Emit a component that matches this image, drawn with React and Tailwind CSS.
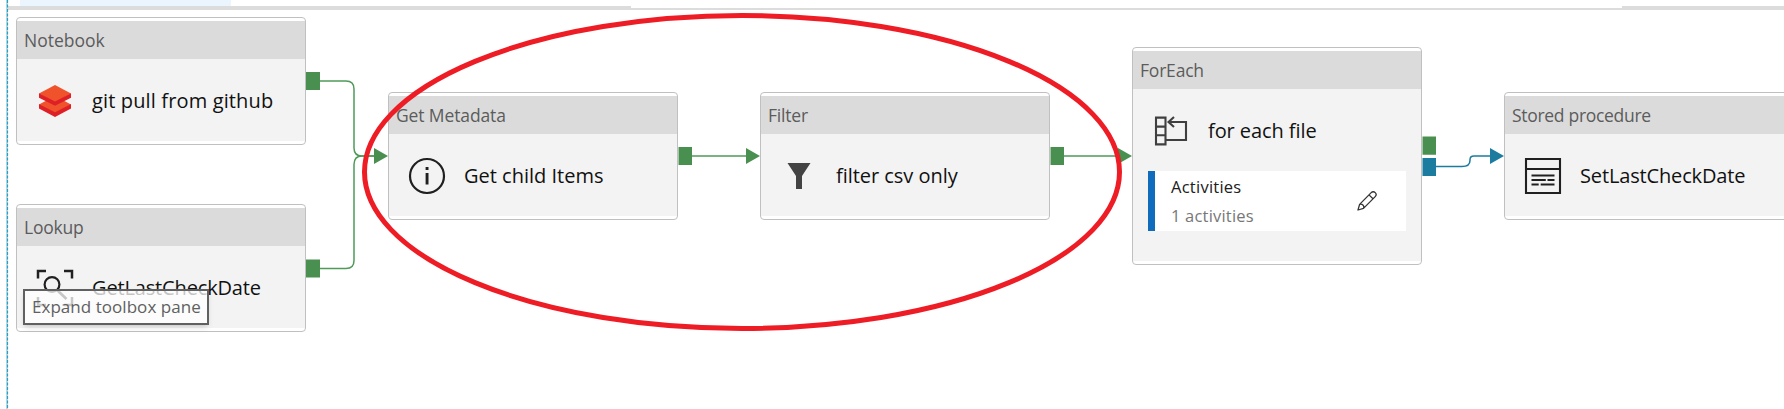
const ink = "#202020";

function BricksIcon() {
  return (
    <svg width="34" height="34" viewBox="0 0 34 34">
      <path d="M1 20.500 17 12l16 8.500L17 29Z" fill="#f0532b" />
      <path d="M1 20 17 28.300l16-8.300v4.500L17 33 1 24.500Z" fill="#de1f26" />
      <path d="M1 9.500 17 1l16 8.500-16 9Z" fill="#f0532b" />
      <path d="M1 9.300l16 8.300L33 9.300v4.500L17 21.800 1 13.800Z" fill="#de1f26" />
    </svg>
  );
}

function LookupIcon() {
  return (
    <svg width="38" height="38" viewBox="0 0 38 38" fill="none" stroke={ink}>
      <path d="M2 9.500V2H10M28 2h8v7.500M2 28v8h8M28 36h8v-8" strokeWidth="2.500" />
      <circle cx="16" cy="15.500" r="7.400" strokeWidth="2.200" />
      <path d="M21 21l9.500 9" strokeWidth="2.600" />
    </svg>
  );
}

function InfoIcon() {
  return (
    <svg width="38" height="38" viewBox="0 0 38 38">
      <circle cx="19" cy="19" r="17" fill="none" stroke={ink} strokeWidth="2.200" />
      <path d="M17.600 10h2.900v3h-2.900zM17.600 16h2.900v11.600h-2.900z" fill={ink} />
    </svg>
  );
}

function FunnelIcon() {
  return (
    <svg width="24" height="28" viewBox="0 0 24 28">
      <path d="M.5 1h23L15 14v13H9V14Z" fill="#434343" />
    </svg>
  );
}

function LoopIcon() {
  return (
    <svg width="34" height="32" viewBox="0 0 34 32" fill="none" stroke="#3f3f3f" strokeWidth="2.100">
      <path d="M2 2.600h9.500v26.800H2zM2 11.600h9.500M2 20.300h9.500M14 7h18v18H12M20 2l-5.500 5L20 12" />
    </svg>
  );
}

function ProcedureIcon() {
  return (
    <svg width="38" height="38" viewBox="0 0 38 38" fill="none" stroke={ink} strokeWidth="2.100">
      <path d="M2 2h34v34H2zM2 12h34M7.500 18.500h23M7.500 23h14.300M23.500 23h7M7.500 27.500h7.200M16.700 27.500h13.800" />
    </svg>
  );
}

function PencilIcon() {
  return (
    <svg width="22" height="22" viewBox="0 0 22 22" fill="none" stroke="#333" strokeWidth="1.300" strokeLinejoin="round">
      <path d="M2 20l1.600-5.600L15.200 2.600a2.700 2.700 0 0 1 4 4L7.500 18.400ZM3.600 14.400a3 3 0 0 1 3.900 4M13 4.900l4 3.900" />
    </svg>
  );
}

function Node({ place, type, typeClass = "tracking-[-0.200px]", name, nameClass, icon, children }) {
  return (
    <section className={`absolute flex w-[290px] flex-col rounded-[4px] border border-[#c0c0c0] bg-white pt-[3px] pb-[3px] ${place}`}>
      <header className="flex h-[38px] shrink-0 items-center bg-[#dbdbdb] pl-[7px] text-[17.500px] text-[#5c5c5c]">
        <span className={typeClass}>{type}</span>
      </header>
      <div className="flex grow flex-col bg-[#f3f3f3]">
        <div className="flex h-[82px] shrink-0 items-center gap-[9px] pt-[2px] text-[20px] text-[#111]">
          <span className="flex w-[66px] shrink-0 justify-center pl-[9px]">{icon}</span>
          <span className={nameClass}>{name}</span>
        </div>
        {children}
      </div>
    </section>
  );
}

export default function App() {
  return (
    <main className="relative h-[409px] w-[1784px] overflow-hidden whitespace-nowrap bg-white font-['Open_Sans',sans-serif]">
      <div className="flex h-[10px] flex-col pl-2">
        <div className="h-[6px] pl-3">
          <div className="h-full w-[211px] bg-[#eaf5fe]" />
        </div>
        <div className="flex h-[2px] justify-between">
          <div className="w-[623px] bg-[#dcdcdc]" />
          <div className="w-[162px] bg-[#dcdcdc]" />
        </div>
        <div className="h-[2px] bg-[#dcdcdc]" />
      </div>

      <Node place="left-[16px] top-[17px] h-[128px]" type="Notebook" typeClass="tracking-[0px]" name="git pull from github" nameClass="tracking-[0.140px]" icon={<BricksIcon />} />
      <Node place="left-[16px] top-[204px] h-[128px]" type="Lookup" name="GetLastCheckDate" nameClass="tracking-[-0.150px]" icon={<LookupIcon />} />
      <Node place="left-[388px] top-[92px] h-[128px]" type="Get Metadata" typeClass="tracking-[-0.120px]" name="Get child Items" nameClass="tracking-[0px]" icon={<InfoIcon />} />
      <Node place="left-[760px] top-[92px] h-[128px]" type="Filter" name="filter csv only" nameClass="tracking-[-0.040px]" icon={<FunnelIcon />} />
      <Node place="left-[1132px] top-[47px] h-[218px]" type="ForEach" name="for each file" nameClass="tracking-[-0.080px]" icon={<LoopIcon />}>
        <div className="ml-[15px] flex h-[60px] w-[258px] items-center border-l-[7px] border-[#0f6cbd] bg-white pl-4 pr-[28px]">
          <div className="flex grow flex-col text-[16.500px] leading-[29px]">
            <span className="tracking-[0.250px] text-[#202020]">Activities</span>
            <span className="tracking-[0.200px] text-[#777]">1 activities</span>
          </div>
          <PencilIcon />
        </div>
      </Node>
      <Node place="left-[1504px] top-[92px] h-[128px]" type="Stored procedure" typeClass="tracking-[-0.300px]" name="SetLastCheckDate" nameClass="tracking-[-0.150px]" icon={<ProcedureIcon />} />

      <svg className="absolute left-0 top-0" width="1784" height="409" viewBox="0 0 1784 409">
        <path d="M7 0V409" stroke="#d6d0cc" strokeWidth="2" />
        <path d="M7.500 0V409" stroke="#00aee6" strokeWidth="1.200" strokeDasharray="3 1.500" />
        <g fill="none" stroke="#4f9a59" strokeWidth="1.500">
          <path d="M320 81h26q8 0 8 8v59q0 8 8 8h12" />
          <path d="M320 268.500h26q8 0 8-8v-96q0-8.500 8-8.500h12" />
          <path d="M692 156h55M1064 156h55" />
        </g>
        <g fill="#488f50">
          <path d="M306 72h14v18h-14zM306 259.500h14v18h-14zM678.500 147h13.500v18h-13.500zM1050.500 147h13.500v18h-13.500zM1422.500 136.500h13.500v18.300h-13.500z" />
          <path d="M374 148l14 8-14 8zM746 148l14 8-14 8zM1118 148l14 8-14 8z" />
        </g>
        <path d="M1436 166.500h26q8 0 8-6v-1q0-3.500 4-3.500h17" fill="none" stroke="#1b7ca0" strokeWidth="1.500" />
        <path d="M1422.500 158h13.500v18h-13.500zM1490 148l14 8-14 8z" fill="#1b7ca0" />
        <ellipse cx="742" cy="172" rx="377.500" ry="156.500" fill="none" stroke="#ee1c24" strokeWidth="5" />
      </svg>

      <div className="absolute left-[23px] top-[289px] flex h-[36px] w-[186px] items-center border-2 border-[#606060] bg-white/75 pl-[7px] text-[17px] tracking-[0.040px] text-[#606060] shadow-md">
        Expand toolbox pane
      </div>
    </main>
  );
}
